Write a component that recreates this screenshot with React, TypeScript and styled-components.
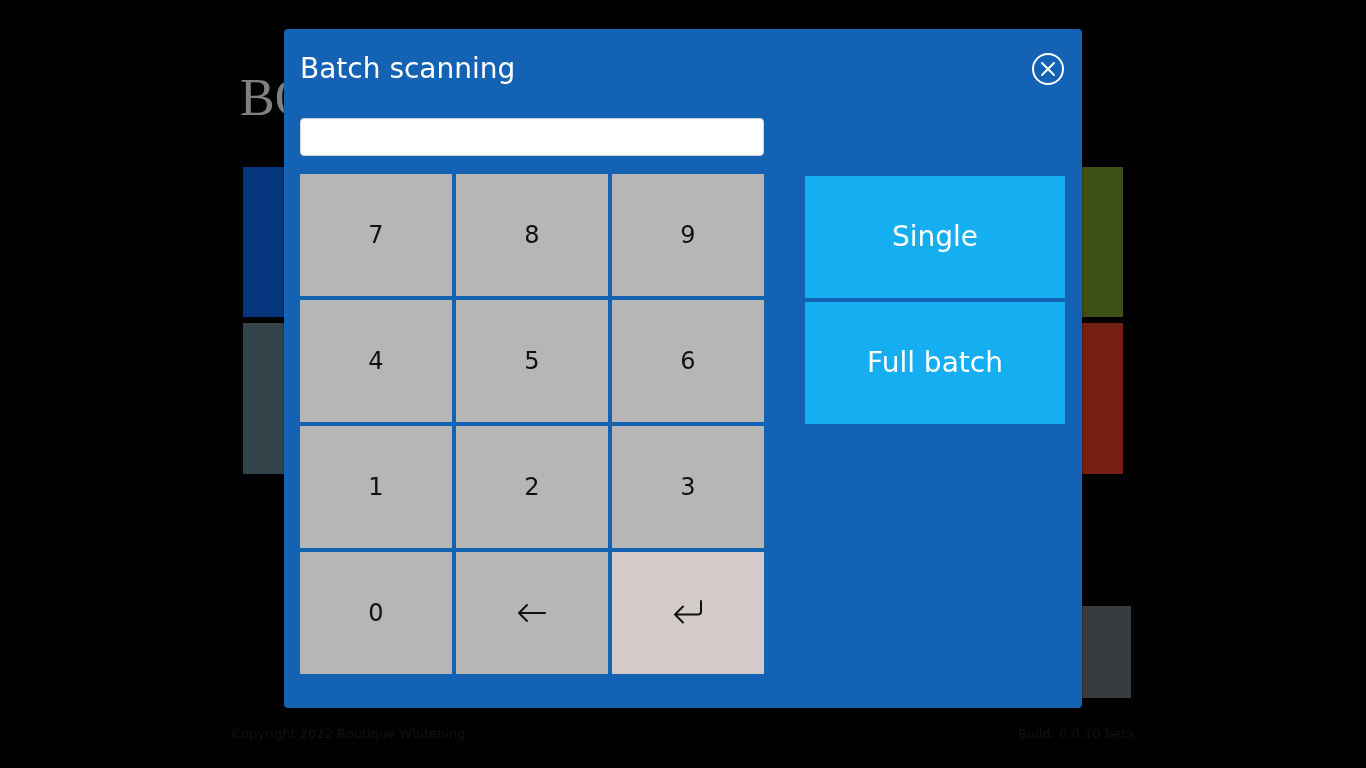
import React, { useState } from 'react';
import styled, { createGlobalStyle } from 'styled-components';

const GlobalStyle = createGlobalStyle`
  *, *::before, *::after { box-sizing: border-box; }
  body {
    margin: 0;
    background: #000;
    color: #111;
    font-family: "DejaVu Sans", sans-serif;
  }
  button, input { font-family: inherit; }
`;

const Page = styled.div`
  display: flex;
  flex-direction: column;
  min-height: 100vh;
  width: 100%;
  max-width: 902px;
  margin: 0 auto;
  padding: 68px 0 24px;
`;

const Brand = styled.header`
  padding-left: 8px;
  color: #808080;
  font: 52px/60px "Liberation Serif", serif;
`;

const Tiles = styled.main`
  display: grid;
  grid-template-columns: 1fr 1fr;
  grid-template-rows: 150px 151px;
  gap: 6px;
  padding: 39px 11px 0;
`;

const Tile = styled.div<{ $color: string }>`
  background: ${(p) => p.$color};
`;

const Panel = styled.div`
  align-self: flex-end;
  width: 152px;
  height: 92px;
  margin: 132px 3px 0 0;
  background: #363b3e;
`;

const Footer = styled.footer`
  display: flex;
  justify-content: space-between;
  margin-top: 28px;
  color: #101213;
  font-size: 13px;
  line-height: 16px;
`;

const Overlay = styled.div`
  position: fixed;
  inset: 0;
  overflow: auto;
  padding: 28px 16px;
`;

const Dialog = styled.section`
  width: 100%;
  max-width: 800px;
  margin: 0 auto;
  padding: 16px 17px 34px 16px;
  border: 1px solid rgba(0, 0, 0, 0.2);
  border-radius: 5px;
  background: #1462b4;
  background-clip: padding-box;
`;

const DialogHeader = styled.div`
  display: flex;
  align-items: center;
  justify-content: space-between;
  height: 48px;
  margin-bottom: 25px;
`;

const Title = styled.h1`
  margin: 0;
  color: #fff;
  font-size: 28px;
  font-weight: 400;
  line-height: 34px;
`;

const CloseButton = styled.button`
  display: flex;
  margin-right: 1px;
  padding: 0;
  border: 0;
  background: none;
  color: #fff;
  cursor: pointer;
`;

const Body = styled.div`
  display: grid;
  grid-template-columns: 464fr 260fr;
  column-gap: 41px;
`;

const CodeInput = styled.input`
  display: block;
  width: 100%;
  height: 38px;
  margin-bottom: 18px;
  padding: 6px 12px;
  border: 1px solid #ced4da;
  border-radius: 4px;
  background: #fff;
  font-size: 16px;
`;

const Keypad = styled.div`
  display: grid;
  grid-template-columns: repeat(3, 1fr);
  grid-auto-rows: 122px;
  gap: 4px;
`;

const Key = styled.button<{ $enter?: boolean }>`
  display: flex;
  align-items: center;
  justify-content: center;
  padding: 0;
  border: 0;
  background: ${(p) => (p.$enter ? '#d3caca' : '#b7b5b6')};
  color: #111;
  font-size: 24px;
  cursor: pointer;
`;

const Actions = styled.div`
  display: grid;
  grid-auto-rows: 122px;
  align-content: start;
  gap: 4px;
  padding-top: 58px;
`;

const Action = styled.button`
  padding: 0 0 2px;
  border: 0;
  background: #15aef1;
  color: #fff;
  font-size: 28px;
  cursor: pointer;
`;

const CloseIcon = () => (
  <svg width="32" height="32" viewBox="0 0 32 32" fill="none" stroke="currentColor" strokeWidth="2" strokeLinecap="round" aria-hidden="true">
    <circle cx="16" cy="16" r="15" />
    <path d="M10 10 22 22M22 10 10 22" />
  </svg>
);

const BackIcon = () => (
  <svg width="32" height="32" viewBox="0 0 32 32" fill="none" stroke="currentColor" strokeWidth="2" strokeLinecap="round" strokeLinejoin="round" aria-hidden="true">
    <path d="M29 16H3M11 8 3 16l8 8" />
  </svg>
);

const EnterIcon = () => (
  <svg width="32" height="32" viewBox="0 0 32 32" fill="none" stroke="currentColor" strokeWidth="2" strokeLinecap="round" strokeLinejoin="round" aria-hidden="true">
    <path d="M29 4V14.500a3 3 0 0 1-3 3H3M11 9.500 3 17.500l8 8" />
  </svg>
);

const digits = ['7', '8', '9', '4', '5', '6', '1', '2', '3', '0'];
const tiles = ['#05367d', '#3c4f14', '#33434a', '#751e12'];

export default function App() {
  const [code, setCode] = useState('');

  return (
    <>
      <GlobalStyle />
      <Page>
        <Brand>BO</Brand>
        <Tiles>
          {tiles.map((color) => (
            <Tile key={color} $color={color} />
          ))}
        </Tiles>
        <Panel />
        <Footer>
          <span>Copyright 2022 Boutique Whitening</span>
          <span>Build: 0.0.10 beta</span>
        </Footer>
      </Page>
      <Overlay>
        <Dialog role="dialog" aria-modal="true" aria-labelledby="dialog-title">
          <DialogHeader>
            <Title id="dialog-title">Batch scanning</Title>
            <CloseButton type="button" aria-label="Close">
              <CloseIcon />
            </CloseButton>
          </DialogHeader>
          <Body>
            <div>
              <CodeInput
                type="text"
                aria-label="Batch code"
                value={code}
                onChange={(e) => setCode(e.target.value)}
              />
              <Keypad>
                {digits.map((d) => (
                  <Key key={d} type="button" onClick={() => setCode(code + d)}>
                    {d}
                  </Key>
                ))}
                <Key type="button" aria-label="Backspace" onClick={() => setCode(code.slice(0, -1))}>
                  <BackIcon />
                </Key>
                <Key type="button" aria-label="Enter" $enter>
                  <EnterIcon />
                </Key>
              </Keypad>
            </div>
            <Actions>
              <Action type="button">Single</Action>
              <Action type="button">Full batch</Action>
            </Actions>
          </Body>
        </Dialog>
      </Overlay>
    </>
  );
}
